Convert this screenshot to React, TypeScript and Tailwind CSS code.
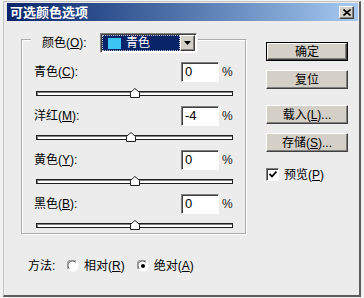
import React from "react";

type Row = { name: string; key: string; value: number };

const rows: Row[] = [
    { name: "青色", key: "C", value: 0 },
    { name: "洋红", key: "M", value: -4 },
    { name: "黄色", key: "Y", value: 0 },
    { name: "黑色", key: "B", value: 0 },
];

const raised =
    "border border-t-white border-l-white border-r-[#404040] border-b-[#404040] shadow-[inset_-1px_-1px_0_#808080] bg-[#d4d0c8]";

const sunken =
    "border border-t-[#808080] border-l-[#808080] border-r-white border-b-white shadow-[inset_1px_1px_0_#404040]";

const Btn = ({ children, isDefault = false }: { children: React.ReactNode; isDefault?: boolean }) => (
    <div className={`w-[82px] h-[19px] ${isDefault ? "border border-black" : ""}`}>
        <div className={`w-full h-full flex items-center justify-center ${raised}`}>{children}</div>
    </div>
);

const Thumb = () => (
    <svg width="10" height="10" viewBox="0 0 10 10">
        <path d="M0.5 9.5V4.5L5 0.5L9.5 4.5V9.5Z" fill="#ffffff" stroke="#202020" />
        <path d="M1.5 8.5V5L5 2" fill="none" stroke="#ffffff" />
    </svg>
);

const Radio = ({ checked }: { checked?: boolean }) => (
    <svg width="12" height="12" viewBox="0 0 12 12">
        <circle cx="6" cy="6" r="5.5" fill="#ffffff" />
        <path d="M1.2 9 A5.5 5.5 0 0 1 9 1.2" fill="none" stroke="#808080" />
        <path d="M2.2 8.6 A4.5 4.5 0 0 1 8.6 2.2" fill="none" stroke="#404040" />
        {checked && <circle cx="6" cy="6" r="2" fill="#000000" />}
    </svg>
);

export default function App() {
    return (
        <div
            className="w-[364px] h-[298px] bg-[#f2f2f2] pt-[1px] pl-[3px] pr-[3px] pb-[1px] text-[12px] text-black overflow-hidden"
            style={{ fontFamily: '"Liberation Sans", "Noto Sans CJK SC", sans-serif' }}
        >
            <div className="h-full flex flex-col bg-[#ececec] border-l border-t border-[#c4c4c4] border-r-2 border-b-2 border-r-[#5c5c5c] border-b-[#5c5c5c] pl-[3px] pt-[1px] pr-[1px]">
                {/* title bar */}
                <div className="h-[18px] shrink-0 flex items-center justify-between pl-[3px] pr-[4px] bg-linear-to-r from-[#0a246a] to-[#a6caf0]">
                    <span className="text-white font-bold text-[13px] leading-none">可选颜色选项</span>
                    <div className={`w-[15px] h-[13px] flex items-center justify-center ${raised}`}>
                        <svg width="8" height="7" viewBox="0 0 8 7">
                            <path d="M0.5 0.5L7.5 6.5M7.5 0.5L0.5 6.5" stroke="#000" strokeWidth="1.6" />
                        </svg>
                    </div>
                </div>

                <div className="flex">
                    {/* left column */}
                    <fieldset className="ml-[14px] mt-[6px] w-[226px] border-2 [border-style:groove] border-white px-[11px] pt-0 pb-[5px]">
                        <legend className="-ml-[3px] pl-[11px] pr-[1px] pt-[6px]">
                            <div className="flex items-center h-[20px]">
                                <span className="w-[58px] leading-none">
                                    颜色(<span className="underline">O</span>):
                                </span>
                                <div className={`w-[97px] h-[20px] flex bg-white p-[1px] ${sunken}`}>
                                    <div className="flex-1 bg-[#0a246a] border border-dotted border-[#c0c0c0] flex items-center gap-[5px] pl-[5px]">
                                        <div className="w-[13px] h-[11px] bg-[#3cc4f4]" />
                                        <span className="text-white leading-none">青色</span>
                                    </div>
                                    <div className={`w-[15px] flex items-center justify-center ${raised}`}>
                                        <svg width="7" height="4" viewBox="0 0 7 4">
                                            <path d="M0 0H7L3.5 4Z" fill="#000" />
                                        </svg>
                                    </div>
                                </div>
                            </div>
                        </legend>

                        <div className="flex flex-col pt-[9px]">
                            {rows.map((r, i) => (
                                <div key={r.key} className={i < rows.length - 1 ? "h-[44px]" : ""}>
                                    <div className="flex items-center h-[20px]">
                                        <span className="flex-1 leading-none">
                                            {r.name}(<span className="underline">{r.key}</span>):
                                        </span>
                                        <div className={`w-[38px] h-[20px] bg-white flex items-center pl-[3px] text-[13px] ${sunken}`}>
                                            {r.value}
                                        </div>
                                        <span className="w-[12px] ml-[3px] text-[12px] text-[#202020]">%</span>
                                    </div>
                                    <div className="relative mt-[9px] ml-[2px] mr-[1px] h-[5px] bg-white border border-[#202020] shadow-[inset_1px_1px_0_#808080]">
                                        <div
                                            className="absolute top-[-4px] -translate-x-1/2"
                                            style={{ left: `${((r.value + 100) / 200) * 100}%` }}
                                        >
                                            <Thumb />
                                        </div>
                                    </div>
                                </div>
                            ))}
                        </div>
                    </fieldset>

                    {/* right column */}
                    <div className="ml-[19px] mt-[21px] flex flex-col">
                        <Btn isDefault>确定</Btn>
                        <div className="mt-[9px]">
                            <Btn>复位</Btn>
                        </div>
                        <div className="mt-[16px]">
                            <Btn>
                                载入(<span className="underline">L</span>)...
                            </Btn>
                        </div>
                        <div className="mt-[9px]">
                            <Btn>
                                存储(<span className="underline">S</span>)...
                            </Btn>
                        </div>
                        <div className="mt-[16px] flex items-center">
                            <div className={`w-[13px] h-[13px] bg-white flex items-center justify-center ${sunken}`}>
                                <svg width="8" height="7" viewBox="0 0 8 7">
                                    <path d="M0.5 3L3 5.5L7.5 0.5" fill="none" stroke="#000" strokeWidth="1.8" />
                                </svg>
                            </div>
                            <span className="ml-[5px] leading-none">
                                预览(<span className="underline">P</span>)
                            </span>
                        </div>
                    </div>
                </div>

                {/* method row */}
                <div className="mt-[23px] ml-[21px] h-[16px] flex items-center">
                    <span className="w-[39px] leading-none">方法:</span>
                    <Radio />
                    <span className="ml-[5px] leading-none">
                        相对(<span className="underline">R</span>)
                    </span>
                    <div className="ml-[12px]">
                        <Radio checked />
                    </div>
                    <span className="ml-[5px] leading-none">
                        绝对(<span className="underline">A</span>)
                    </span>
                </div>
            </div>
        </div>
    );
}
